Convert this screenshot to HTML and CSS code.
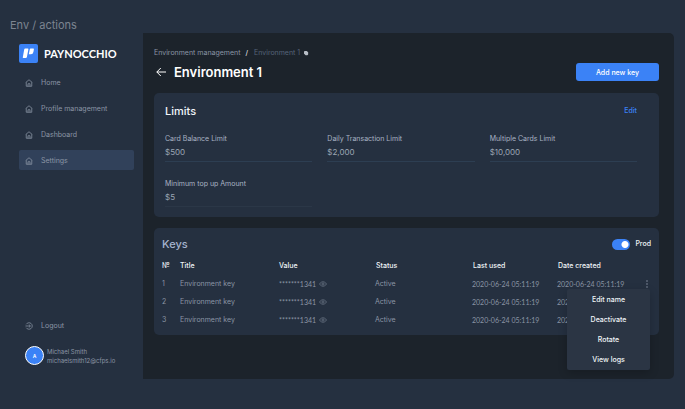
FILE: index.html
```html
<!DOCTYPE html>
<html lang="en">
<head>
<meta charset="utf-8">
<meta name="viewport" content="width=device-width, initial-scale=1">
<title>Paynocchio – Environment 1</title>
<link rel="stylesheet" href="styles.css">
</head>
<body>
<svg class="sprite" aria-hidden="true">
  <symbol id="home" viewBox="0 0 16 16"><path d="M1.500 7 8 1.500 14.500 7M2.500 6.500v8h11v-8M6 14.500V9.500h4v5"/></symbol>
  <symbol id="eye" viewBox="0 0 16 12"><path d="M1 6c3.500-6 10.500-6 14 0-3.500 6-10.500 6-14 0z"/><circle cx="8" cy="6" r="2.200"/></symbol>
  <symbol id="dots" viewBox="0 0 4 16"><circle cx="2" cy="2" r="1.500"/><circle cx="2" cy="8" r="1.500"/><circle cx="2" cy="14" r="1.500"/></symbol>
</svg>
<p class="caption">Env / actions</p>
<div class="shell">
  <aside class="sidebar">
    <a class="brand" href="#">
      <svg class="brand-mark" viewBox="0 0 19 19" aria-hidden="true"><rect width="19" height="19" rx="2"/><path d="M6.200 4.500h2.600q.8 0 .6.800L7.900 13q-.2 1-1.200 1H4.300q-.7 0-.5-.8L5.200 5.400q.2-.9 1-.9zM11.600 4.500h2.700q.8 0 .6.800l-.5 2.700q-.4 2.200-2.400 2.200H9.800l1-4.900q.1-.8.800-.8z"/></svg>
      <span>PAYNOCCHIO</span>
    </a>
    <nav class="nav">
      <a href="#"><svg class="icon"><use href="#home"/></svg>Home</a>
      <a href="#"><svg class="icon"><use href="#home"/></svg>Profile management</a>
      <a href="#"><svg class="icon"><use href="#home"/></svg>Dashboard</a>
      <a href="#" class="active" aria-current="page"><svg class="icon"><use href="#home"/></svg>Settings</a>
    </nav>
    <div class="account">
      <button class="logout" type="button"><svg class="icon" viewBox="0 0 16 16"><path d="M2.500 4.500a6.500 6.500 0 1 1 0 7M1 8h9.500M7.500 4.800 10.800 8l-3.300 3.200"/></svg>Logout</button>
      <div class="profile">
        <span class="avatar">A</span>
        <div class="who"><span>Michael Smith</span><span>michaelsmith12@cfps.io</span></div>
      </div>
    </div>
  </aside>
  <main class="main">
    <nav class="crumbs" aria-label="Breadcrumb">
      <a href="#">Environment management</a><span class="slash">/</span><span class="current">Environment 1</span>
      <button class="copy" type="button" aria-label="Copy"><svg viewBox="0 0 6 6"><rect width="4" height="4" rx="1"/><rect x="1" y="1" width="4" height="4" rx="1"/></svg></button>
    </nav>
    <header class="title-row">
      <a class="back" href="#" aria-label="Back"><svg viewBox="0 0 10 10"><path d="M10 5H.8M4.800 1 .8 5l4 4"/></svg></a>
      <h1>Environment 1</h1>
      <button class="primary" type="button">Add new key</button>
    </header>
    <section class="card limits">
      <div class="card-head"><h2>Limits</h2><button class="edit" type="button">Edit</button></div>
      <div class="fields">
        <div class="field"><label for="balance">Card Balance Limit</label><input id="balance" value="$500" readonly></div>
        <div class="field"><label for="daily">Daily Transaction Limit</label><input id="daily" value="$2,000" readonly></div>
        <div class="field"><label for="multiple">Multiple Cards Limit</label><input id="multiple" value="$10,000" readonly></div>
        <div class="field last"><label for="topup">Minimum top up Amount</label><input id="topup" value="$5" readonly></div>
      </div>
    </section>
    <section class="card keys">
      <div class="card-head"><h2>Keys</h2><label class="switch"><input type="checkbox" checked>Prod</label></div>
      <table>
        <colgroup><col class="c-num"><col class="c-title"><col class="c-value"><col class="c-status"><col class="c-used"><col><col class="c-more"></colgroup>
        <thead><tr><th>№</th><th>Title</th><th>Value</th><th>Status</th><th>Last used</th><th>Date created</th><th></th></tr></thead>
        <tbody>
          <tr><td>1</td><td>Environment key</td><td><span class="secret">*******1341<button type="button" aria-label="Show"><svg><use href="#eye"/></svg></button></span></td><td>Active</td><td class="date">2020-06-24 05:11:19</td><td class="date">2020-06-24 05:11:19</td>
            <td class="more"><button type="button" aria-label="Actions"><svg><use href="#dots"/></svg></button>
              <div class="menu"><button type="button">Edit name</button><button type="button">Deactivate</button><button type="button">Rotate</button><button type="button">View logs</button></div></td></tr>
          <tr><td>2</td><td>Environment key</td><td><span class="secret">*******1341<button type="button" aria-label="Show"><svg><use href="#eye"/></svg></button></span></td><td>Active</td><td class="date">2020-06-24 05:11:19</td><td class="date">2020-06-24 05:11:19</td><td></td></tr>
          <tr><td>3</td><td>Environment key</td><td><span class="secret">*******1341<button type="button" aria-label="Show"><svg><use href="#eye"/></svg></button></span></td><td>Active</td><td class="date">2020-06-24 05:11:19</td><td class="date">2020-06-24 05:11:19</td><td></td></tr>
        </tbody>
      </table>
    </section>
  </main>
</div>
</body>
</html>
```
FILE: styles.css
```css
:root {
  --bg: #253040;
  --panel: #1c232b;
  --blue: #3b82f6;
  --text: #f1f5f9;
  --soft: #a9b3c4;
  --muted: #8b95a5;
}
* { box-sizing: border-box; }
body {
  margin: 0;
  min-height: 100vh;
  display: flex;
  flex-direction: column;
  padding: 0 11px 30px 0;
  background: var(--bg);
  color: var(--muted);
  font: 7px/10px Inter, "Noto Sans", sans-serif;
}
h1, h2, p { margin: 0; font-weight: 500; }
a { color: inherit; text-decoration: none; }
button, input { font: inherit; color: inherit; border: 0; padding: 0; background: none; }
button { cursor: pointer; }
svg { display: block; fill: none; stroke: currentColor; }
.sprite { position: absolute; width: 0; height: 0; }

.caption { padding: 17px 10px 0; font-size: 11px; line-height: 16px; font-weight: 400; color: #7c8490; }
.shell { flex: 1; display: grid; grid-template-columns: 143px 1fr; }

.sidebar { display: flex; flex-direction: column; padding: 11px 9px 14px 19px; }
.brand { display: flex; align-items: center; gap: 6px; color: #fff; font: 700 11px/19px Lato, sans-serif; }
.brand-mark { width: 19px; height: 19px; stroke: none; fill: #fff; }
.brand-mark rect { fill: var(--blue); }
.nav { display: flex; flex-direction: column; gap: 6px; margin-top: 9px; }
.nav a, .logout { display: flex; align-items: center; gap: 8px; height: 20px; padding: 1px 6px 0; border-radius: 2px; }
.nav .active { background: #31415a; }
.icon { width: 8px; height: 8px; stroke-width: 1.5; }
.account { margin-top: auto; display: grid; gap: 11px; }
.profile { display: flex; align-items: center; gap: 3px; padding-left: 6px; }
.avatar {
  display: grid; place-items: center; width: 19px; height: 19px;
  border: 1px solid #fff; border-radius: 50%; background: var(--blue);
  color: #fff; font-size: 5px; font-weight: 600;
}
.who { display: grid; line-height: 9px; font-size: 6px; }

.main { min-width: 0; padding: 15px 15px 0 11px; border-radius: 0 5px 5px 0; background: var(--panel); }
.crumbs { display: flex; align-items: center; color: var(--muted); }
.slash { margin: 0 6px 0 5px; color: var(--text); }
.current { color: #56637a; }
.copy { margin-left: 4px; color: #b8bec7; }
.copy svg { width: 5px; height: 5px; fill: currentColor; stroke: none; }
.title-row { display: flex; align-items: center; gap: 8px; margin: 5px 0 12px; color: #fff; }
.back { margin-left: 2px; }
.back svg { width: 10px; height: 10px; }
h1 { font-size: 13px; line-height: 18px; }
.title-row h1 { font-weight: 600; }
.primary { margin-left: auto; width: 83px; height: 18px; padding-top: 1px; border-radius: 3px; background: var(--blue); color: #fff; font-weight: 500; }

.card { border-radius: 5px; background: var(--bg); }
.card + .card { margin-top: 11px; }
.card-head { display: flex; align-items: center; justify-content: space-between; }
h2 { font-size: 11px; line-height: 16px; }
.limits { padding: 10px 22px 10px 11px; }
.limits h2 { color: var(--text); }
.edit { color: var(--blue); font-weight: 500; }
.fields { display: grid; grid-template-columns: repeat(3, 1fr); gap: 17px 15px; margin-top: 15px; }
.field { display: grid; min-width: 0; }
.field label { color: var(--soft); }
.field input { width: 100%; height: 18px; padding-bottom: 2px; border-bottom: 1px solid #2d3e52; outline: 0; font-size: 8px; color: #9ca6b4; }
.field.last input { border-color: #2b3747; }

.keys { padding: 8px 8px 6px; }
.keys h2 { color: #a5b4cf; }
.switch { display: flex; align-items: center; gap: 5px; color: var(--text); font-weight: 500; }
.switch input {
  appearance: none; width: 18px; height: 11px; margin: 0; border-radius: 6px;
  background: radial-gradient(circle at 13px 50%, #fff 3px, var(--blue) 4px);
}
table { width: 100%; margin-top: 5px; border-collapse: collapse; table-layout: fixed; }
.c-num { width: 18px; }
.c-title { width: 99px; }
.c-value { width: 96px; }
.c-status { width: 97px; }
.c-used { width: 85px; }
.c-more { width: 8px; }
th, td { height: 18px; padding: 0; text-align: left; vertical-align: middle; white-space: nowrap; }
th { color: var(--text); font-weight: 500; }
th:nth-child(n+4) { padding-left: 1px; }
.secret, .date { font-family: Lato, sans-serif; }
.secret { display: flex; align-items: center; gap: 3px; }
.secret svg { width: 8px; height: 6px; stroke-width: 1; }
.more { position: relative; }
.more > button { display: block; margin: 0 auto; }
.more > button svg { width: 2px; height: 8px; fill: currentColor; stroke: none; }
.menu {
  position: absolute; top: 14px; right: 1px; z-index: 1; width: 83px; padding-top: 1px;
  display: grid; border-radius: 2px; background: #2b3544; box-shadow: 0 3px 10px rgb(0 0 0 / 20%);
}
.menu button { height: 20px; color: var(--text); font-weight: 500; }
```
